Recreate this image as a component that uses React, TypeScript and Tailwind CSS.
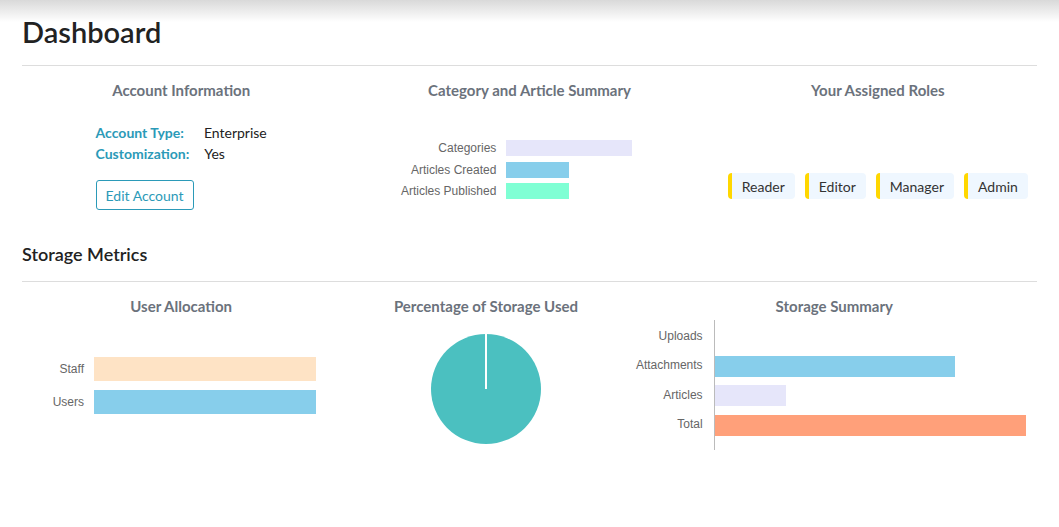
const ui = { fontFamily: 'Lato, "Open Sans", sans-serif' };
const chart = { fontFamily: '"Liberation Sans", Arial, sans-serif' };

function ColTitle({ children }: { children: string }) {
  return (
    <h3 className="mt-[14px] text-center text-[15px] leading-5 font-bold text-[#6b727c]">
      {children}
    </h3>
  );
}

export default function App() {
  const articleRows = [
    { label: 'Categories', width: 126, color: 'bg-[#e6e6fa]' },
    { label: 'Articles Created', width: 63, color: 'bg-[#87ceeb]' },
    { label: 'Articles Published', width: 63, color: 'bg-[#7fffd4]' },
  ];
  const roles = ['Reader', 'Editor', 'Manager', 'Admin'];
  const storageRows = [
    { label: 'Uploads', width: 0, color: '' },
    { label: 'Attachments', width: 240, color: 'bg-[#87ceeb]' },
    { label: 'Articles', width: 71, color: 'bg-[#e6e6fa]' },
    { label: 'Total', width: 311, color: 'bg-[#ffa07a]' },
  ];

  return (
    <div
      className="min-h-[527px] bg-[linear-gradient(to_bottom,#d9d9d9,#fff_22px)] px-[22px] pt-[14px]"
      style={ui}
    >
      <h1 className="text-[29px] leading-9 font-semibold text-[#222]">Dashboard</h1>
      <hr className="mt-[15px] border-t border-[#ddd]" />

      {/* top row */}
      <div className="-mx-[15px] grid grid-cols-3">
        <div className="px-[15px]">
          <ColTitle>Account Information</ColTitle>
          <div className="mt-[22px] flex justify-center">
            <div className="text-[14px] leading-[21px]">
              <div>
                <span className="font-bold text-[#2b9ab8]">Account Type:</span>
                <span className="ml-5 text-[#222]">Enterprise</span>
              </div>
              <div>
                <span className="font-bold text-[#2b9ab8]">Customization:</span>
                <span className="ml-[15px] text-[#222]">Yes</span>
              </div>
              <button className="mt-4 h-[30px] rounded-[3px] border border-[#2b9ab8] px-[9px] text-[14px] text-[#2b9ab8]">
                Edit Account
              </button>
            </div>
          </div>
        </div>

        <div className="px-[15px]">
          <ColTitle>Category and Article Summary</ColTitle>
          <div className="mt-10 flex flex-col gap-[5.5px]" style={chart}>
            {articleRows.map((r) => (
              <div key={r.label} className="flex h-4 items-center">
                <span className="w-[126px] text-right text-[12px] text-[#666]">{r.label}</span>
                <span className={`ml-[10px] h-4 ${r.color}`} style={{ width: r.width }} />
              </div>
            ))}
          </div>
        </div>

        <div className="px-[15px]">
          <ColTitle>Your Assigned Roles</ColTitle>
          <div className="mt-[73px] flex justify-center gap-[10px]">
            {roles.map((r) => (
              <span
                key={r}
                className="flex h-[26px] items-center rounded-[4px] border-l-4 border-[#ffd700] bg-[#eff7ff] px-[10px] text-[14px] text-[#333]"
              >
                {r}
              </span>
            ))}
          </div>
        </div>
      </div>

      <h2 className="mt-[30px] text-[18px] leading-7 font-semibold text-[#222]">Storage Metrics</h2>
      <hr className="mt-[13px] border-t border-[#ddd]" />

      {/* storage row */}
      <div className="-mx-[15px] grid grid-cols-12">
        <div className="col-span-4 px-[15px]">
          <ColTitle>User Allocation</ColTitle>
          <div className="mt-[41px] flex flex-col gap-[9px]" style={chart}>
            <div className="flex h-6 items-center">
              <span className="w-[62px] text-right text-[12px] text-[#666]">Staff</span>
              <span className="ml-[10px] h-6 w-[222px] bg-[#fee3c5]" />
            </div>
            <div className="flex h-6 items-center">
              <span className="w-[62px] text-right text-[12px] text-[#666]">Users</span>
              <span className="ml-[10px] h-6 w-[222px] bg-[#87ceeb]" />
            </div>
          </div>
        </div>

        <div className="col-span-3 px-[15px]">
          <ColTitle>Percentage of Storage Used</ColTitle>
          <div className="mt-[18px] flex justify-center">
            <svg width="110" height="110" viewBox="0 0 110 110">
              <circle cx="55" cy="55" r="55" fill="#4bc0c0" />
              <line x1="55" y1="0" x2="55" y2="55" stroke="#fff" strokeWidth="2" />
            </svg>
          </div>
        </div>

        <div className="col-span-5 px-[15px]">
          <ColTitle>Storage Summary</ColTitle>
          <div className="mt-1 flex" style={chart}>
            <div className="flex w-[71px] flex-col text-right text-[12px] text-[#666]">
              {storageRows.map((r) => (
                <div key={r.label} className="flex h-[29.5px] items-center justify-end pt-[2px]">
                  {r.label}
                </div>
              ))}
            </div>
            <div className="ml-[11px] h-[130px] border-l border-[#bbb]">
              {storageRows.map((r) => (
                <div key={r.label} className="flex h-[29.5px] items-center pt-[4px]">
                  {r.width > 0 && <span className={`h-[21px] ${r.color}`} style={{ width: r.width }} />}
                </div>
              ))}
            </div>
          </div>
        </div>
      </div>
    </div>
  );
}
